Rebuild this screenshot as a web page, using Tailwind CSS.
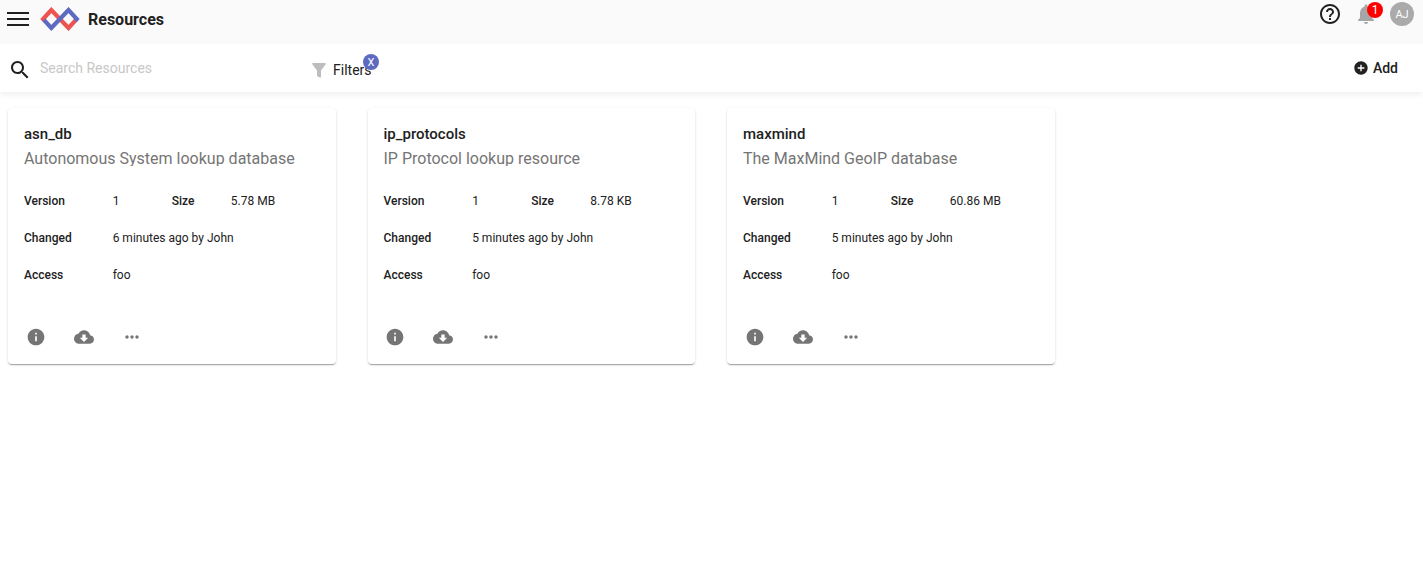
<!DOCTYPE html>
<html lang="en">
<head>
<meta charset="utf-8">
<title>Resources</title>
<script src="https://cdn.jsdelivr.net/npm/@tailwindcss/browser@4"></script>
</head>
<body class="h-[585px] overflow-hidden bg-white font-['Roboto',sans-serif] text-[#212121]">
<svg class="hidden">
  <symbol id="info" viewBox="0 0 24 24"><path d="M12 2C6.480 2 2 6.480 2 12s4.480 10 10 10 10-4.480 10-10S17.520 2 12 2zm1 15h-2v-6h2v6zm0-8h-2V7h2v2z"/></symbol>
  <symbol id="cloud" viewBox="0 0 24 24"><path d="M19.350 10.040C18.670 6.590 15.640 4 12 4 9.110 4 6.600 5.640 5.350 8.040 2.340 8.360 0 10.910 0 14c0 3.310 2.690 6 6 6h13c2.760 0 5-2.240 5-5 0-2.640-2.050-4.780-4.650-4.960zM17 13l-5 5-5-5h3V9h4v4h3z"/></symbol>
  <symbol id="more" viewBox="0 0 24 24"><path d="M6 10c-1.100 0-2 .9-2 2s.9 2 2 2 2-.9 2-2-.9-2-2-2zm12 0c-1.100 0-2 .9-2 2s.9 2 2 2 2-.9 2-2-.9-2-2-2zm-6 0c-1.100 0-2 .9-2 2s.9 2 2 2 2-.9 2-2-.9-2-2-2z"/></symbol>
</svg>

<header class="flex h-11 items-start justify-between bg-[#fafafa]">
  <div class="flex h-[38px] items-center">
    <svg class="ml-[7px] h-[14px] w-[22px] fill-[#212121]" viewBox="0 0 22 14"><path d="M0 0h22v2H0zM0 6h22v2H0zM0 12h22v2H0z"/></svg>
    <svg class="ml-[11px] h-6 w-10" viewBox="0 0 40 24" fill="none" stroke-width="4.200">
      <path stroke="#ef5350" d="M4.800 13.800L3.100 12L11.300 3L28.500 21L35.500 13.400"/>
      <path stroke="#5c6bc0" d="M3.900 12.900L11.300 21L28.500 3L36.800 12L35.200 13.800"/>
    </svg>
    <h1 class="mt-0.5 ml-2 text-base font-bold">Resources</h1>
  </div>
  <div class="flex items-center pt-0.5 pr-[9px]">
    <svg class="size-6 fill-[#212121]" viewBox="0 0 24 24"><path d="M11 18h2v-2h-2v2zm1-16C6.480 2 2 6.480 2 12s4.480 10 10 10 10-4.480 10-10S17.520 2 12 2zm0 18c-4.410 0-8-3.590-8-8s3.590-8 8-8 8 3.590 8 8-3.590 8-8 8zm0-14c-2.210 0-4 1.790-4 4h2c0-1.100.9-2 2-2s2 .9 2 2c0 2-3 1.750-3 5h2c0-2.250 3-2.500 3-5 0-2.210-1.790-4-4-4z"/></svg>
    <div class="relative ml-3">
      <svg class="size-6 fill-[#a6a6a6]" viewBox="0 0 24 24"><path d="M12 22c1.100 0 2-.9 2-2h-4c0 1.100.89 2 2 2zm6-6v-5c0-3.070-1.640-5.640-4.500-6.320V4c0-.83-.67-1.500-1.500-1.500s-1.500.67-1.500 1.500v.68C7.630 5.360 6 7.920 6 11v5l-2 2v1h16v-1l-2-2z"/></svg>
      <span class="absolute top-0 left-[13px] flex size-4 items-center justify-center rounded-full bg-[#ff0000] text-xs leading-4 text-white">1</span>
    </div>
    <div class="ml-3 flex size-6 items-center justify-center rounded-full bg-[#aaaaaa] pt-0.5 text-[11px] leading-4 text-white">AJ</div>
  </div>
</header>

<div class="flex h-12 items-center bg-white shadow-[0_4px_5px_-1px_rgba(0,0,0,0.06)]">
  <svg class="mt-1 ml-2 size-6 fill-[#212121]" viewBox="0 0 24 24"><path d="M15.500 14h-.79l-.28-.27C15.410 12.590 16 11.110 16 9.500 16 5.910 13.090 3 9.500 3S3 5.910 3 9.500 5.910 16 9.500 16c1.610 0 3.090-.59 4.230-1.570l.27.28v.79l5 4.990L20.490 19l-4.990-5zm-6 0C7.010 14 5 11.990 5 9.500S7.010 5 9.500 5 14 7.010 14 9.500 11.990 14 9.500 14z"/></svg>
  <div class="ml-2 w-[272px] text-sm text-[#c7c7c7]">Search Resources</div>
  <div class="relative mt-1 flex items-center">
    <svg class="h-[15px] w-[14px] fill-[#bdbdbd]" viewBox="0 0 14 15"><path d="M1 0h12q1.300.2.500 1.500L9 7.500V14q-.2.900-1 .7L5.500 13.200q-.5-.3-.5-1V7.500L.5 1.500Q-.3.200 1 0z"/></svg>
    <span class="ml-[7px] text-sm">Filters</span>
    <span class="absolute -top-1.5 left-[51px] flex size-4 items-center justify-center rounded-full bg-[#5c6bc0] pt-0.5 text-[11px] leading-4 text-white">X</span>
  </div>
  <button class="mr-[25px] ml-auto flex items-center gap-1 text-sm font-medium">
    <svg class="size-4 fill-[#212121]" viewBox="0 0 24 24"><path d="M12 2C6.480 2 2 6.480 2 12s4.480 10 10 10 10-4.480 10-10S17.520 2 12 2zm5 11h-4v4h-2v-4H7v-2h4V7h2v4h4v2z"/></svg>
    Add
  </button>
</div>

<main class="grid grid-cols-[repeat(3,327.5px)] gap-8 px-2 pt-4">
  <article class="flex h-64 flex-col rounded bg-white px-4 pt-4 shadow-[0_1px_1px_rgba(0,0,0,0.14),0_2px_1px_-1px_rgba(0,0,0,0.2),0_1px_3px_rgba(0,0,0,0.12)]">
    <h2 class="text-[15px] leading-5 font-medium">asn_db</h2>
    <p class="mt-1 h-[18px] overflow-hidden text-base leading-[22px] text-[#757575]">Autonomous System lookup database</p>
    <dl class="mt-4 grid auto-rows-[37px] grid-cols-[30%_20%_20%_30%] items-center text-xs">
      <dt class="font-medium">Version</dt><dd>1</dd><dt class="font-medium">Size</dt><dd>5.78 MB</dd>
      <dt class="font-medium">Changed</dt><dd class="col-span-3">6 minutes ago by John</dd>
      <dt class="font-medium">Access</dt><dd class="col-span-3">foo</dd>
    </dl>
    <div class="mt-[34px] ml-0.5 flex gap-7 fill-[#757575]">
      <svg class="size-5"><use href="#info"/></svg><svg class="size-5"><use href="#cloud"/></svg><svg class="size-5"><use href="#more"/></svg>
    </div>
  </article>
  <article class="flex h-64 flex-col rounded bg-white px-4 pt-4 shadow-[0_1px_1px_rgba(0,0,0,0.14),0_2px_1px_-1px_rgba(0,0,0,0.2),0_1px_3px_rgba(0,0,0,0.12)]">
    <h2 class="text-[15px] leading-5 font-medium">ip_protocols</h2>
    <p class="mt-1 h-[18px] overflow-hidden text-base leading-[22px] text-[#757575]">IP Protocol lookup resource</p>
    <dl class="mt-4 grid auto-rows-[37px] grid-cols-[30%_20%_20%_30%] items-center text-xs">
      <dt class="font-medium">Version</dt><dd>1</dd><dt class="font-medium">Size</dt><dd>8.78 KB</dd>
      <dt class="font-medium">Changed</dt><dd class="col-span-3">5 minutes ago by John</dd>
      <dt class="font-medium">Access</dt><dd class="col-span-3">foo</dd>
    </dl>
    <div class="mt-[34px] ml-[1.500px] flex gap-7 fill-[#757575]">
      <svg class="size-5"><use href="#info"/></svg><svg class="size-5"><use href="#cloud"/></svg><svg class="size-5"><use href="#more"/></svg>
    </div>
  </article>
  <article class="flex h-64 flex-col rounded bg-white px-4 pt-4 shadow-[0_1px_1px_rgba(0,0,0,0.14),0_2px_1px_-1px_rgba(0,0,0,0.2),0_1px_3px_rgba(0,0,0,0.12)]">
    <h2 class="text-[15px] leading-5 font-medium">maxmind</h2>
    <p class="mt-1 h-[18px] overflow-hidden text-base leading-[22px] text-[#757575]">The MaxMind GeoIP database</p>
    <dl class="mt-4 grid auto-rows-[37px] grid-cols-[30%_20%_20%_30%] items-center text-xs">
      <dt class="font-medium">Version</dt><dd>1</dd><dt class="font-medium">Size</dt><dd>60.86 MB</dd>
      <dt class="font-medium">Changed</dt><dd class="col-span-3">5 minutes ago by John</dd>
      <dt class="font-medium">Access</dt><dd class="col-span-3">foo</dd>
    </dl>
    <div class="mt-[34px] ml-0.5 flex gap-7 fill-[#757575]">
      <svg class="size-5"><use href="#info"/></svg><svg class="size-5"><use href="#cloud"/></svg><svg class="size-5"><use href="#more"/></svg>
    </div>
  </article>
</main>
</body>
</html>
